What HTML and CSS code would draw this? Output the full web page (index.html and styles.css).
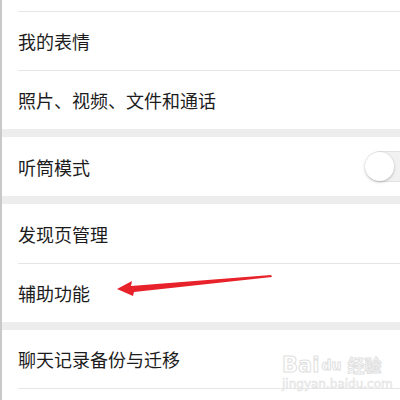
FILE: index.html
```html
<!DOCTYPE html>
<html>
<head>
    <meta charset="UTF-8">
    <title>设置</title>
    <link rel="stylesheet" href="styles.css">
</head>
<body>
    <div class="page">
        <div class="group">
            <div class="cut"></div>
            <div class="row line">我的表情</div>
            <div class="row line">照片、视频、文件和通话</div>
        </div>
        <div class="group">
            <div class="row tall">
                <span>听筒模式</span>
                <span class="switch"><i></i></span>
            </div>
        </div>
        <div class="group">
            <div class="row tall">发现页管理</div>
            <div class="row line">辅助功能</div>
        </div>
        <div class="group">
            <div class="row">聊天记录备份与迁移</div>
            <div class="cut line"></div>
        </div>

        <svg class="arrow" width="400" height="400" viewBox="0 0 400 400">
            <polygon points="117,289 132,281 131,286 271,275 272,277 134,292 133,296" fill="#e8222a"/>
        </svg>

        <div class="mark">
            <div class="mark-logo"><span>Bai</span><span class="du">du</span><span class="jy">经验</span></div>
            <div class="mark-url">jingyan.baidu.com</div>
        </div>
    </div>
</body>
</html>
```

FILE: styles.css
```css
:root {
    --gap: #ededed;
    --line: #e6e6e6;
    --text: #1c1c1c;
}
body {
    margin: 0;
    width: 400px;
    height: 400px;
    overflow: hidden;
    background: var(--gap);
    font-family: "Noto Sans CJK SC", "Noto Sans", sans-serif;
}
.page {
    position: relative;
    height: 400px;
    border-left: 2px solid #c9c9c9;
    display: flex;
    flex-direction: column;
    gap: 8px;
}
.group {
    background: #fff;
    padding-left: 16px;
}
.group:last-of-type {
    flex: 1;
}
.cut {
    height: 11px;
}
.row {
    height: 58px;
    display: flex;
    align-items: center;
    justify-content: space-between;
    font-size: 18px;
    color: var(--text);
}
.row.tall {
    height: 59px;
}
.line {
    border-top: 1px solid var(--line);
}
.switch {
    width: 50px;
    height: 29px;
    margin-right: -16px;
    border: 1px solid #e2e2e2;
    border-right: none;
    border-radius: 16px 0 0 16px;
    background: #f1f1f1;
    position: relative;
}
.switch i {
    position: absolute;
    left: -1px;
    top: 0;
    width: 29px;
    height: 29px;
    border-radius: 50%;
    background: #fff;
    box-shadow: 0 1px 3px rgba(0, 0, 0, .25);
}
.arrow {
    position: absolute;
    left: -2px;
    top: 0;
}
.mark {
    position: absolute;
    left: 280px;
    top: 353px;
    color: #fff;
    -webkit-text-stroke: 1px #e0e0e0;
    font-family: "DejaVu Sans", sans-serif;
}
.mark-logo {
    font-size: 21px;
    font-weight: bold;
    line-height: 24px;
    display: flex;
    align-items: center;
    gap: 2px;
}
.mark-logo .du {
    font-size: 14px;
}
.mark-logo .jy {
    font-family: "Noto Sans CJK SC", sans-serif;
    font-size: 17px;
    margin-left: 4px;
}
.mark-url {
    font-size: 12px;
    line-height: 14px;
    -webkit-text-stroke: 0.6px #e0e0e0;
}
```
